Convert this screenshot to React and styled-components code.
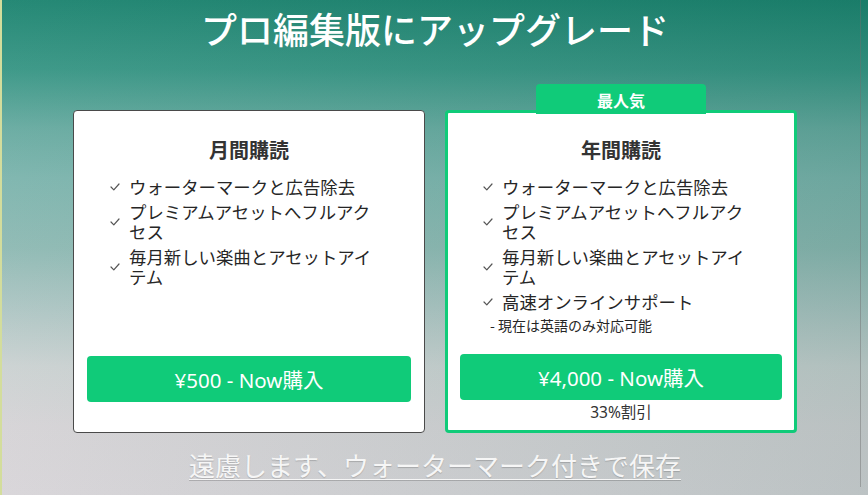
import React from 'react';
import styled, { createGlobalStyle } from 'styled-components';

const GlobalStyle = createGlobalStyle`
    html, body {
        margin: 0;
        padding: 0;
    }
    body {
        font-family: "Noto Sans", "Noto Sans CJK JP", sans-serif;
    }
`

const green = '#10cb79';

const plans = [
    {
        name: '月間購読',
        features: [
            'ウォーターマークと広告除去',
            'プレミアムアセットへフルアクセス',
            '毎月新しい楽曲とアセットアイテム',
        ],
        price: '¥500 - Now購入',
    },
    {
        name: '年間購読',
        badge: '最人気',
        features: [
            'ウォーターマークと広告除去',
            'プレミアムアセットへフルアクセス',
            '毎月新しい楽曲とアセットアイテム',
            '高速オンラインサポート',
        ],
        note: '- 現在は英語のみ対応可能',
        price: '¥4,000 - Now購入',
        discount: '33%割引',
    },
]

const Page = styled.div `
    position: relative;
    width: 868px;
    height: 495px;
    box-sizing: border-box;
    overflow: hidden;
    border-left: 2px solid #d3dd9c;
    display: flex;
    flex-direction: column;
    align-items: center;
    background:
        linear-gradient(100deg, rgba(255, 255, 255, 0.04) 0%, rgba(0, 70, 55, 0.14) 100%),
        linear-gradient(to bottom,
            #1d8470 0%,
            #389685 14%,
            #68aba1 26%,
            #7db5ae 36%,
            #8fbab4 50%,
            #aec6c4 62%,
            #cdd3d3 74%,
            #d8d5d8 86%,
            #dbd7db 100%);

    /* thin edge line of the captured window */
    &::after {
        content: '';
        position: absolute;
        right: 7px;
        top: 0;
        bottom: 8px;
        width: 1px;
        background: rgba(110, 110, 110, 0.45);
    }
`

const Title = styled.h1 `
    margin: 0;
    padding-top: 6px;
    font-family: "Noto Sans CJK JP", sans-serif;
    font-size: 36px;
    line-height: 44px;
    font-weight: 500;
    color: #ffffff;
`

const Cards = styled.div `
    margin-top: 60px;
    display: flex;
    gap: 20px;
`

const Card = styled.div `
    position: relative;
    width: 352px;
    height: 323px;
    box-sizing: border-box;
    background: #ffffff;
    border: ${p => p.featured ? `3px solid ${green}` : '1px solid #4a4a4a'};
    border-radius: 4px;
    padding: ${p => p.featured ? '23px 12px 0' : '25px 13px 0'};
    display: flex;
    flex-direction: column;
    color: #262626;
`

const Badge = styled.div `
    position: absolute;
    top: -29px;
    left: 50%;
    transform: translateX(-50%);
    width: 170px;
    height: 30px;
    background: ${green};
    border-radius: 4px 4px 0 0;
    color: #ffffff;
    font-family: "Noto Sans CJK JP", sans-serif;
    font-weight: 700;
    font-size: 16px;
    line-height: 32px;
    text-align: center;
`

const PlanName = styled.h2 `
    margin: 0;
    font-family: "Noto Sans CJK JP", sans-serif;
    font-size: 20px;
    line-height: 28px;
    font-weight: 700;
    text-align: center;
    color: #333333;
`

const Features = styled.ul `
    list-style: none;
    margin: 13px 0 0;
    padding: 0 0 0 23px;
    display: flex;
    flex-direction: column;
    gap: 4px;
`

const Feature = styled.li `
    display: flex;
    align-items: center;
    font-family: "Noto Sans CJK JP", sans-serif;
    font-size: 17.4px;
    line-height: 20.5px;
`

const CheckBox = styled.span `
    flex: none;
    width: 19px;
    display: flex;
    align-items: center;
`

const FeatureText = styled.span `
    width: 252px;
`

const Note = styled.li `
    padding-left: 7px;
    font-family: "Noto Sans CJK JP", sans-serif;
    font-size: 14px;
    line-height: 18px;
`

const Footer = styled.div `
    margin-top: auto;
    height: 76px;
    display: flex;
    flex-direction: column;
    align-items: stretch;
`

const BuyButton = styled.button `
    height: 46px;
    border: none;
    border-radius: 4px;
    background: ${green};
    color: #ffffff;
    font-family: "Noto Sans", "Noto Sans CJK JP", sans-serif;
    font-size: 20.5px;
    cursor: pointer;
    padding: 0;
`

const Discount = styled.div `
    margin-top: 2px;
    text-align: center;
    font-family: "Noto Sans", "Noto Sans CJK JP", sans-serif;
    font-size: 15.5px;
    line-height: 20px;
    color: #333333;
`

const SkipLink = styled.a `
    margin-top: 17px;
    font-family: "Noto Sans CJK JP", sans-serif;
    font-size: 26px;
    line-height: 30px;
    color: #f6f6f6;
    text-decoration: underline;
    text-decoration-thickness: 1px;
    text-underline-offset: 3px;
    text-shadow: 0 1px 1px rgba(0, 0, 0, 0.18);
    cursor: pointer;
`

const Check = () => (
    <svg width='10' height='8' viewBox='0 0 10 8' fill='none'>
        <polyline points='1,4 3.8,6.8 9,1' stroke='#555' strokeWidth='1.2' strokeLinecap='round' strokeLinejoin='round' />
    </svg>
)

const App = () => {
    return (
        <>
            <GlobalStyle />
            <Page>
                <Title>プロ編集版にアップグレード</Title>
                <Cards>
                    {plans.map(plan => (
                        <Card key={plan.name} featured={plan.badge ? 1 : 0}>
                            {plan.badge && <Badge>{plan.badge}</Badge>}
                            <PlanName>{plan.name}</PlanName>
                            <Features>
                                {plan.features.map(f => (
                                    <Feature key={f}>
                                        <CheckBox><Check /></CheckBox>
                                        <FeatureText>{f}</FeatureText>
                                    </Feature>
                                ))}
                                {plan.note && <Note>{plan.note}</Note>}
                            </Features>
                            <Footer>
                                <BuyButton>{plan.price}</BuyButton>
                                {plan.discount && <Discount>{plan.discount}</Discount>}
                            </Footer>
                        </Card>
                    ))}
                </Cards>
                <SkipLink>遠慮します、ウォーターマーク付きで保存</SkipLink>
            </Page>
        </>
    )
}

export default App
